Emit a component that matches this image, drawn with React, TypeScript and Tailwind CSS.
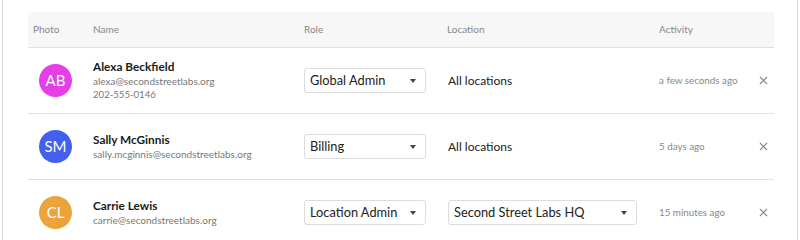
import { X } from "lucide-react"

interface Member {
  initials: string
  color: string
  name: string
  email: string
  phone?: string
  role: string
  location?: string
  activity: string
}

const members: Member[] = [
  {
    initials: "AB",
    color: "bg-[#e63ee6]",
    name: "Alexa Beckfield",
    email: "alexa@secondstreetlabs.org",
    phone: "202-555-0146",
    role: "Global Admin",
    activity: "a few seconds ago",
  },
  {
    initials: "SM",
    color: "bg-[#435ff0]",
    name: "Sally McGinnis",
    email: "sally.mcginnis@secondstreetlabs.org",
    role: "Billing",
    activity: "5 days ago",
  },
  {
    initials: "CL",
    color: "bg-[#eda33b]",
    name: "Carrie Lewis",
    email: "carrie@secondstreetlabs.org",
    role: "Location Admin",
    location: "Second Street Labs HQ",
    activity: "15 minutes ago",
  },
]

const cols = "grid grid-cols-[65px_211px_144px_211px_98px_17px] items-center"

function Select({ value, width }: { value: string; width: string }) {
  return (
    <div
      className={`flex h-[25px] ${width} items-center justify-between rounded-[3px] border border-[#dcdcdc] bg-white pl-[5px] pr-[9px] text-[12.8px] text-[#222]`}
    >
      <span>{value}</span>
      <span className="h-0 w-0 border-x-[3.5px] border-t-[4px] border-x-transparent border-t-[#444]" />
    </div>
  )
}

export default function App() {
  return (
    <div className="h-[240px] w-[800px] overflow-hidden bg-white font-['Lato',sans-serif]">
      <div className="ml-[2px] h-full w-[796px] border-x border-[#d6d6d6] pl-[25px] pt-[12px]">
        <div className="w-[746px]">
          {/* Header */}
          <div className={`${cols} h-[36px] border-b border-[#e0e0e0] bg-[#f7f7f7] text-[10px] text-[#888]`}>
            <span className="pl-[5px]">Photo</span>
            <span>Name</span>
            <span>Role</span>
            <span className="-ml-px">Location</span>
            <span>Activity</span>
            <span />
          </div>

          {members.map((m) => (
            <div key={m.email} className={`${cols} h-[66px] border-b border-[#e0e0e0]`}>
              <div className="pl-[11px]">
                <div
                  className={`flex h-[33px] w-[33px] items-center justify-center rounded-full ${m.color} text-[15px] text-white`}
                >
                  {m.initials}
                </div>
              </div>
              <div className="flex flex-col leading-[14px]">
                <span className="text-[11.8px] font-bold text-[#1a1a1a]">{m.name}</span>
                <span className="text-[10px] text-[#777]">{m.email}</span>
                {m.phone && <span className="text-[9.6px] text-[#777]">{m.phone}</span>}
              </div>
              <Select value={m.role} width="w-[122px]" />
              {m.location ? (
                <Select value={m.location} width="w-[189px]" />
              ) : (
                <span className="text-[12px] text-[#222]">All locations</span>
              )}
              <span className="text-[9.8px] text-[#888]">{m.activity}</span>
              <X className="h-[13px] w-[13px] text-[#8a8a8a]" strokeWidth={2} />
            </div>
          ))}
        </div>
      </div>
    </div>
  )
}
